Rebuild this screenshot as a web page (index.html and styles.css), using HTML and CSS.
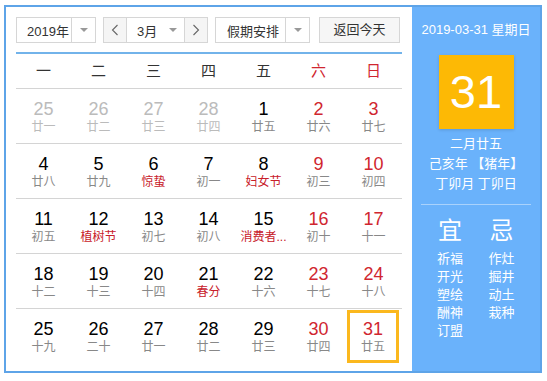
FILE: index.html
```html
<!DOCTYPE html>
<html lang="zh-CN">
<head>
    <meta charset="UTF-8">
    <title>万年历</title>
    <link rel="stylesheet" href="styles.css">
</head>
<body>

    <div class="calendar">
        <div class="main">
            <div class="toolbar">
                <div class="select year">
                    <span class="select-text">2019年</span>
                    <span class="select-arrow"><i class="tri"></i></span>
                </div>
                <div class="select month">
                    <span class="step">
                        <svg width="8" height="12" viewBox="0 0 8 12"><polyline points="6.5,1 1.5,6 6.5,11" fill="none" stroke="#666" stroke-width="1.1"/></svg>
                    </span>
                    <span class="select-text">3月</span>
                    <span class="month-arrow"><i class="tri"></i></span>
                    <span class="step next">
                        <svg width="8" height="12" viewBox="0 0 8 12"><polyline points="1.5,1 6.5,6 1.5,11" fill="none" stroke="#666" stroke-width="1.1"/></svg>
                    </span>
                </div>
                <div class="select holiday">
                    <span class="select-text">假期安排</span>
                    <span class="select-arrow"><i class="tri"></i></span>
                </div>
                <div class="btn-today">返回今天</div>
            </div>

            <div class="weekdays">
                <span>一</span><span>二</span><span>三</span><span>四</span><span>五</span>
                <span class="red">六</span><span class="red">日</span>
            </div>

            <div class="weeks" id="weeks"></div>
        </div>

        <div class="side">
            <div class="side-date">2019-03-31 星期日</div>
            <div class="side-day">31</div>
            <div class="side-lunar">
                <div>二月廿五</div>
                <div>己亥年 【猪年】</div>
                <div>丁卯月 丁卯日</div>
            </div>
            <div class="side-line"></div>
            <div class="almanac">
                <div class="almanac-col">
                    <div class="almanac-title">宜</div>
                    <div>祈福</div>
                    <div>开光</div>
                    <div>塑绘</div>
                    <div>酬神</div>
                    <div>订盟</div>
                </div>
                <div class="almanac-col">
                    <div class="almanac-title">忌</div>
                    <div>作灶</div>
                    <div>掘井</div>
                    <div>动土</div>
                    <div>栽种</div>
                </div>
            </div>
        </div>
    </div>

    <script>
        // [日期, 农历/节日, 类型]  o = 非本月, f = 节日节气, t = 今天
        const dias = [
            [25, '廿一', 'o'], [26, '廿二', 'o'], [27, '廿三', 'o'], [28, '廿四', 'o'], [1, '廿五'], [2, '廿六'], [3, '廿七'],
            [4, '廿八'], [5, '廿九'], [6, '惊蛰', 'f'], [7, '初一'], [8, '妇女节', 'f'], [9, '初三'], [10, '初四'],
            [11, '初五'], [12, '植树节', 'f'], [13, '初七'], [14, '初八'], [15, '消费者...', 'f'], [16, '初十'], [17, '十一'],
            [18, '十二'], [19, '十三'], [20, '十四'], [21, '春分', 'f'], [22, '十六'], [23, '十七'], [24, '十八'],
            [25, '十九'], [26, '二十'], [27, '廿一'], [28, '廿二'], [29, '廿三'], [30, '廿四'], [31, '廿五', 't']
        ];

        let html = '';
        for (let w = 0; w < 5; w++) {
            html += '<div class="week">';
            for (let d = 0; d < 7; d++) {
                const [num, lunar, tipo] = dias[w * 7 + d];
                let cls = 'day';
                if (tipo === 'o') cls += ' other';
                else if (d >= 5) cls += ' weekend';
                if (tipo === 't') cls += ' today';
                html += `
                    <div class="${cls}">
                        <div class="num">${num}</div>
                        <div class="lunar${tipo === 'f' ? ' fest' : ''}">${lunar}</div>
                    </div>`;
            }
            html += '</div>';
        }
        document.getElementById('weeks').innerHTML = html;
    </script>

</body>
</html>
```

FILE: styles.css
```css
body {
    margin: 0;
    font-family: "Liberation Sans", "Noto Sans CJK SC", sans-serif;
    background-color: #fff;
    color: #333;
}

.calendar {
    display: flex;
    width: 534px;
    height: 364px;
    margin: 5px 0 0 4px;
    border: 2px solid #5ea4e8;
}

.main {
    width: 386px;
    padding: 10px 10px 0 10px;
}

.toolbar {
    display: flex;
    height: 26px;
    padding-bottom: 9px;
    border-bottom: 2px solid #72b3ea;
}

.select {
    display: flex;
    align-items: center;
    height: 24px;
    border: 1px solid #d6d6d6;
    background-color: #fff;
    font-size: 13px;
    color: #333;
}

.select-text {
    flex: 1;
    padding-left: 10px;
}

.select-arrow, .month-arrow {
    display: flex;
    align-items: center;
    justify-content: center;
    width: 23px;
    height: 24px;
    border-left: 1px solid #d6d6d6;
}

.month-arrow {
    border-left: none;
    border-right: 1px solid #d6d6d6;
    width: 22px;
}

.tri {
    width: 0;
    height: 0;
    border-left: 4px solid transparent;
    border-right: 4px solid transparent;
    border-top: 4px solid #999;
}

.year {
    width: 78px;
}

.month {
    width: 103px;
    margin-left: 7px;
}

.month .select-text {
    padding-left: 10px;
}

.step {
    display: flex;
    align-items: center;
    justify-content: center;
    width: 22px;
    height: 24px;
    background-color: #f5f5f5;
    border-right: 1px solid #d6d6d6;
}

.step.next {
    border-right: none;
}

.holiday {
    width: 93px;
    margin-left: 7px;
}

.holiday .select-text {
    padding-left: 11px;
}

.btn-today {
    width: 79px;
    height: 24px;
    margin-left: 9px;
    border: 1px solid #d6d6d6;
    background-color: #f6f6f6;
    font-size: 13px;
    line-height: 24px;
    text-align: center;
    color: #333;
}

.weekdays {
    display: grid;
    grid-template-columns: repeat(7, 55px);
    height: 34px;
    border-bottom: 1px solid #d4d4d4;
    font-size: 15px;
    line-height: 34px;
    text-align: center;
    color: #333;
}

.red {
    color: #d0262f;
}

.week {
    display: grid;
    grid-template-columns: repeat(7, 55px);
    height: 54px;
    border-bottom: 1px solid #d4d4d4;
}

.week:last-child {
    border-bottom: none;
}

.day {
    padding-top: 10px;
    text-align: center;
}

.num {
    font-size: 18px;
    line-height: 20px;
    color: #000;
}

.lunar {
    font-size: 12px;
    line-height: 16px;
    color: #888;
    white-space: nowrap;
}

.lunar.fest {
    color: #c8202a;
}

.weekend .num {
    color: #d0262f;
}

.other .num, .other .lunar {
    color: #bbb;
}

.today {
    margin: 1px 2px 0 1px;
    padding-top: 9px;
    box-shadow: inset 0 0 0 3px #fbb81e;
}

.side {
    width: 128px;
    background-color: #6ab2fb;
    color: #fff;
    text-align: center;
}

.side-date {
    margin-top: 13px;
    font-size: 13px;
    line-height: 20px;
}

.side-day {
    width: 75px;
    height: 74px;
    margin: 15px auto 0 auto;
    background-color: #fdb905;
    font-size: 47px;
    line-height: 74px;
    box-shadow: 0 1px 3px rgba(0, 0, 0, 0.15);
}

.side-lunar {
    margin-top: 5px;
    font-size: 13px;
    line-height: 20px;
}

.side-line {
    width: 110px;
    height: 1px;
    margin: 10px auto 0 auto;
    background-color: #a9d2fc;
}

.almanac {
    display: flex;
    margin-top: 11px;
    padding-left: 25px;
    text-align: left;
    font-size: 13px;
    line-height: 18px;
}

.almanac-col {
    width: 54px;
}

.almanac-title {
    margin-bottom: 4px;
    padding-left: 1px;
    font-size: 24px;
    line-height: 30px;
}
```
